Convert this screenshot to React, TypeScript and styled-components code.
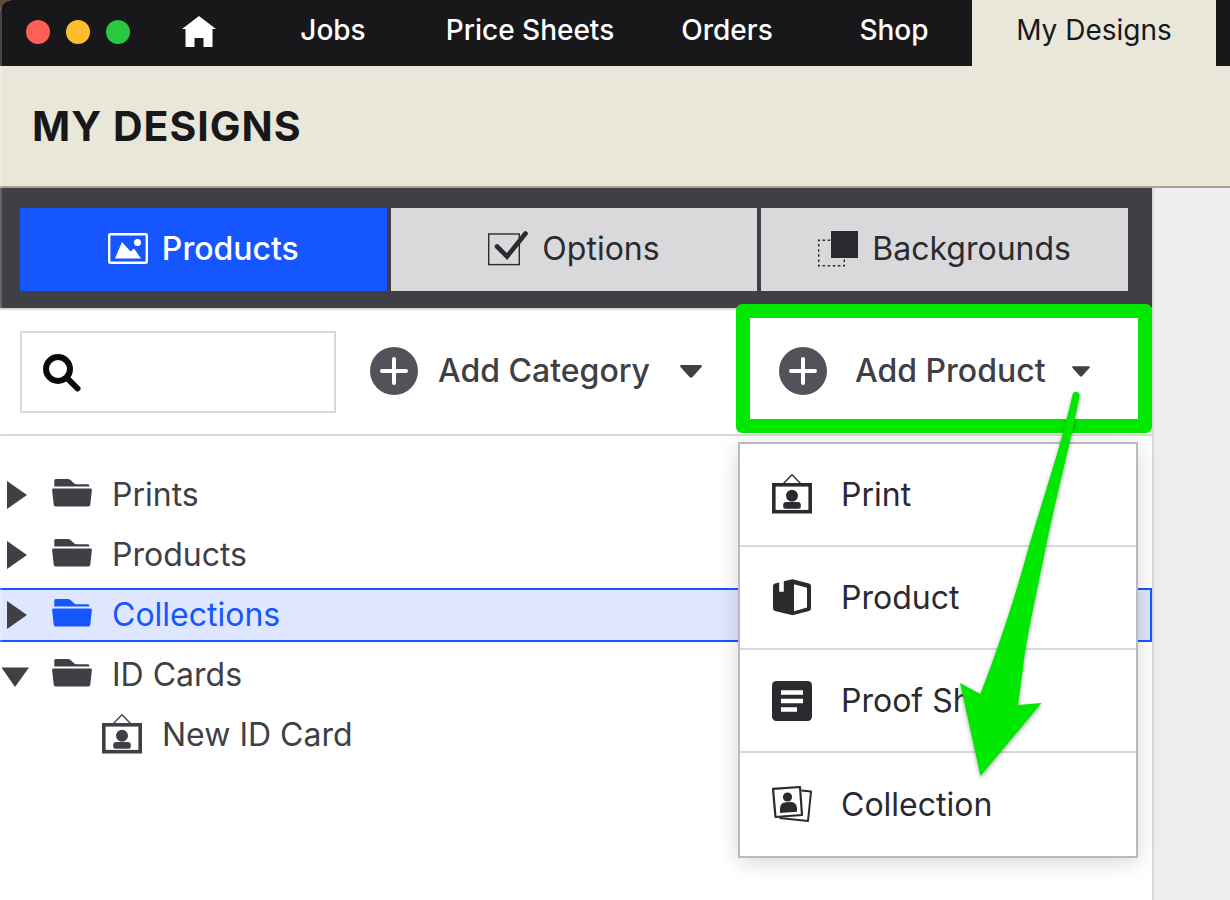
import React from "react";
import styled, { createGlobalStyle, css } from "styled-components";

const color = {
  ink: "#18181b",
  text: "#2b2a2f",
  slate: "#3f3f46",
  plus: "#52525b",
  blue: "#1556ff",
  blueSoft: "#dfe6ff",
  sand: "#e9e7da",
  sandLine: "#a6a48f",
  line: "#d9d9db",
  menuLine: "#b9b9be",
  panel: "#eeeef0",
  mark: "#00e800",
};

const GlobalStyle = createGlobalStyle`
  *, *::before, *::after { box-sizing: border-box; }
  body {
    margin: 0;
    background: #5a4a38;
    color: ${color.text};
    font-family: Inter, "Liberation Sans", sans-serif;
    font-size: 32px;
    line-height: 40px;
  }
  button, input { font: inherit; color: inherit; }
  button { background: none; border: 0; padding: 0; cursor: pointer; }
  svg { display: block; flex: none; }
`;

const Window = styled.div`
  position: relative;
  display: flex;
  flex-direction: column;
  min-height: 100vh;
  overflow: hidden;
  border-top-left-radius: 12px;
  background: #fff;

  &::after {
    content: "";
    position: absolute;
    inset: 0 auto 0 0;
    width: 2px;
    background: rgba(255, 255, 255, 0.2);
    pointer-events: none;
  }
`;

const TitleBar = styled.header`
  display: flex;
  height: 66px;
  padding-right: 14px;
  background: ${color.ink};
`;

const Lights = styled.div`
  display: flex;
  flex: none;
  align-items: center;
  gap: 16px;
  padding: 0 52px 2px 26px;
`;

const Light = styled.span<{ $tone: string }>`
  width: 24px;
  height: 24px;
  border-radius: 50%;
  background: ${(p) => p.$tone};
`;

const HomeLink = styled.a`
  display: flex;
  flex: none;
  align-items: center;
  width: 62px;
  padding-bottom: 3px;
  color: #fff;
`;

const Nav = styled.nav`
  display: grid;
  flex: 1;
  grid-template-columns: 178fr 216fr 178fr 156fr 244fr;
`;

const NavLink = styled.a<{ $active?: boolean }>`
  display: flex;
  align-items: center;
  justify-content: center;
  padding-bottom: 6px;
  font-size: 28px;
  font-weight: 500;
  white-space: nowrap;
  text-decoration: none;
  color: #fff;
  ${(p) =>
    p.$active &&
    css`
      font-weight: 400;
      color: ${color.ink};
      background: ${color.sand};
    `}
`;

const PageHead = styled.div`
  display: flex;
  align-items: center;
  height: 122px;
  padding: 0 32px;
  background: ${color.sand};
  border-bottom: 2px solid ${color.sandLine};
`;

const PageTitle = styled.h1`
  margin: 0;
  font-size: 41px;
  line-height: 48px;
  font-weight: 700;
  letter-spacing: 1px;
  color: ${color.ink};
`;

const Body = styled.div`
  display: flex;
  flex: 1;
`;

const Library = styled.main`
  flex: 1;
  min-width: 0;
`;

const SidePanel = styled.aside`
  flex: none;
  width: 78px;
  border-left: 2px solid ${color.line};
  background: ${color.panel};
`;

const Tabs = styled.div`
  display: grid;
  grid-template-columns: repeat(3, 1fr);
  gap: 4px;
  padding: 20px 24px 17px 20px;
  background: ${color.slate};
`;

const Tab = styled.button<{ $active?: boolean }>`
  display: flex;
  align-items: center;
  justify-content: center;
  gap: 14px;
  height: 83px;
  padding-bottom: 2px;
  font-weight: ${(p) => (p.$active ? 500 : 400)};
  color: ${(p) => (p.$active ? "#fff" : color.text)};
  background: ${(p) => (p.$active ? color.blue : color.line)};
`;

const Toolbar = styled.div`
  display: flex;
  align-items: center;
  gap: 34px;
  height: 128px;
  padding-left: 20px;
  border: solid ${color.line};
  border-width: 2px 0;
`;

const Search = styled.label`
  display: flex;
  flex: 1;
  align-items: center;
  gap: 12px;
  min-width: 0;
  height: 82px;
  padding: 2px 20px 0;
  border: 2px solid ${color.line};
`;

const SearchInput = styled.input`
  flex: 1;
  min-width: 0;
  border: 0;
  outline: 0;
  background: none;
`;

const AddButton = styled.button`
  display: flex;
  flex: none;
  align-items: center;
  height: 82px;
  padding-bottom: 2px;
  font-weight: 500;
  white-space: nowrap;
  color: ${color.slate};
`;

const AddLabel = styled.span<{ $before: number; $after: number }>`
  padding: 0 ${(p) => p.$after}px 0 ${(p) => p.$before}px;
`;

const ProductArea = styled.div`
  position: relative;
  display: flex;
  flex: none;
  align-items: center;
  align-self: stretch;
  width: 416px;
  padding-left: 43px;
`;

const Highlight = styled.div`
  position: absolute;
  inset: -6px 0 1px 0;
  border: 14px solid ${color.mark};
  border-radius: 6px;
  pointer-events: none;
`;

const Menu = styled.div`
  position: absolute;
  top: 132px;
  left: 2px;
  width: 400px;
  border: 2px solid ${color.menuLine};
  background: #fff;
  box-shadow: 0 4px 20px rgba(0, 0, 0, 0.16);
`;

const MenuItem = styled.button`
  display: flex;
  align-items: center;
  gap: 29px;
  width: 100%;
  height: 103px;
  padding-left: 32px;
  text-align: left;

  &:not(:last-child) {
    border-bottom: 2px solid ${color.line};
  }
`;

const Pointer = styled.svg`
  position: absolute;
  top: 78px;
  left: 216px;
  overflow: visible;
  pointer-events: none;
  filter: drop-shadow(0 2px 2px rgba(0, 0, 0, 0.35));
`;

const Tree = styled.ul`
  display: flex;
  flex-direction: column;
  gap: 6px;
  margin: 0;
  padding: 32px 0;
  list-style: none;
`;

const TreeRow = styled.button<{ $selected?: boolean; $child?: boolean }>`
  display: flex;
  align-items: center;
  width: 100%;
  height: 54px;
  padding-left: ${(p) => (p.$child ? 102 : 0)}px;
  border: 2px solid transparent;
  border-left: 0;
  text-align: left;
  color: ${color.slate};
  ${(p) =>
    p.$selected &&
    css`
      color: ${color.blue};
      background: ${color.blueSoft};
      border-color: ${color.blue};
    `}
`;

const Twisty = styled.span`
  flex: none;
  width: 52px;
  color: ${color.slate};
`;

const TreeLabel = styled.span`
  padding-left: 20px;
`;

const HomeIcon = () => (
  <svg width="34" height="31" viewBox="0 0 34 31" fill="currentColor" aria-hidden="true">
    <path d="M17 0 34 13h-3.500v18H21.500v-9h-9v9H3.500V13H0z" />
  </svg>
);

const ImageIcon = () => (
  <svg width="40" height="31" viewBox="0 0 40 31" fill="none" aria-hidden="true">
    <rect x="1.200" y="1.200" width="37.600" height="28.600" rx="1" stroke="currentColor" strokeWidth="2.400" />
    <path d="M7 25.500 14 9l8.500 9.500 3.500-3 7 10z" fill="currentColor" />
    <circle cx="29.500" cy="9.500" r="3.500" fill="currentColor" />
  </svg>
);

const CheckIcon = () => (
  <svg width="40" height="35" viewBox="0 0 40 35" fill="none" stroke="currentColor" aria-hidden="true">
    <rect x="0.700" y="3" width="30.600" height="30.600" strokeWidth="1.400" />
    <path d="M9 15.500 19 25.500 37.500 2.500" strokeWidth="4.600" strokeLinecap="round" />
  </svg>
);

const LayersIcon = () => (
  <svg width="40" height="36" viewBox="0 0 40 36" fill="none" aria-hidden="true">
    <rect x="0.700" y="9.200" width="25.600" height="25.600" stroke="currentColor" strokeWidth="1.400" strokeDasharray="2.600 2.520" strokeDashoffset="1.300" />
    <path d="M13 0h27v27H13z" fill="currentColor" />
  </svg>
);

const SearchIcon = () => (
  <svg width="40" height="40" viewBox="0 0 40 40" fill="none" stroke="#0a0a0b" aria-hidden="true">
    <circle cx="16" cy="16" r="12" strokeWidth="6" />
    <path d="M25 25 35.500 35.500" strokeWidth="6" strokeLinecap="round" />
  </svg>
);

const PlusIcon = () => (
  <svg width="48" height="48" viewBox="0 0 48 48" aria-hidden="true">
    <circle cx="24" cy="24" r="24" fill={color.plus} />
    <path d="M24 12v24M12 24h24" stroke="#fff" strokeWidth="4" strokeLinecap="round" />
  </svg>
);

const Caret = ({ width, height }: { width: number; height: number }) => (
  <svg width={width} height={height} viewBox="0 0 22 13" fill="currentColor" aria-hidden="true">
    <path d="M1 0h20q1.500.800.500 2L12.500 12q-1.500 1.300-3 0L.500 2Q-.500.800 1 0z" />
  </svg>
);

const TwistyIcon = ({ open }: { open?: boolean }) => (
  <svg width="30" height="28" viewBox="0 0 30 28" fill="currentColor" aria-hidden="true">
    <path d={open ? "M1.500 6.500h27.500L15 26z" : "M7 0v28l20-14z"} />
  </svg>
);

const FolderIcon = () => (
  <svg width="40" height="32" viewBox="0 0 40 32" fill="currentColor" aria-hidden="true">
    <path d="M2.300 7.500V1.500Q2.300 0 3.800 0h12q1.600 0 2.700 1l3.800 3.500q.8.700 2 .7h11.500q1.500 0 1.500 1.300v1z" />
    <path d="M1.500 9.500h37q1.600 0 1.400 1.600l-1.600 14.500q-.2 1.900-2 1.900H3.700q-1.800 0-2-1.900L.1 11.100q-.2-1.600 1.400-1.600z" />
  </svg>
);

const FrameIcon = () => (
  <svg width="40" height="42" viewBox="0 0 40 42" fill="none" aria-hidden="true">
    <path d="M11 10 20 .700 29 10" stroke="currentColor" strokeWidth="1.300" />
    <rect x="1.800" y="10.800" width="36.400" height="26.900" stroke="currentColor" strokeWidth="3.600" />
    <circle cx="20" cy="21.800" r="6" fill="currentColor" />
    <path d="M14.500 28h11q3.300 0 3.300 3v1.200q0 2.500-2.500 2.500H13.700q-2.500 0-2.500-2.500V31q0-3 3.300-3z" fill="currentColor" />
  </svg>
);

const BoxIcon = () => (
  <svg width="40" height="40" viewBox="0 0 40 40" aria-hidden="true">
    <path
      fill="currentColor"
      fillRule="evenodd"
      d="M20.500 1.200 37 5.500q2 .5 2 2.600v22.200q0 2.100-2 2.600L20.500 37.200 3 32.900q-2-.5-2-2.600V8.100q0-2.100 2-2.600l4.200-1.100v9.300h4.600V3.300zM22 6.200v27l13-3.600V9.800z"
    />
  </svg>
);

const SheetIcon = () => (
  <svg width="40" height="40" viewBox="0 0 40 40" aria-hidden="true">
    <rect width="40" height="40" rx="4.500" fill="currentColor" />
    <path d="M9 11.500h22M9 20h22M9 28.500h16" stroke="#fff" strokeWidth="4.400" />
  </svg>
);

const PhotosIcon = () => (
  <svg width="40" height="40" viewBox="0 0 40 40" fill="none" aria-hidden="true">
    <path d="M29.500 5.500 39 6.600 36 36 7.500 33" stroke="currentColor" strokeWidth="2" strokeLinejoin="round" />
    <path d="M1 3.800 28 2l2 28L3.500 32z" stroke="currentColor" strokeWidth="2.200" strokeLinejoin="round" />
    <circle cx="15.500" cy="12" r="4.600" fill="currentColor" />
    <path d="M8 28v-4q0-6.500 6-6.700l4-.2q6.500 0 7 5.900v3.700z" fill="currentColor" />
  </svg>
);

const tabs = [
  { label: "Products", icon: <ImageIcon />, active: true },
  { label: "Options", icon: <CheckIcon />, active: false },
  { label: "Backgrounds", icon: <LayersIcon />, active: false },
];

const folders = [
  { label: "Prints" },
  { label: "Products" },
  { label: "Collections", selected: true },
  { label: "ID Cards", open: true },
];

const menuItems = [
  { label: "Print", icon: <FrameIcon /> },
  { label: "Product", icon: <BoxIcon /> },
  { label: "Proof Sheet", icon: <SheetIcon /> },
  { label: "Collection", icon: <PhotosIcon /> },
];

export default function App() {
  return (
    <Window>
      <GlobalStyle />
      <TitleBar>
        <Lights>
          <Light $tone="#ff5f57" />
          <Light $tone="#febc2e" />
          <Light $tone="#28c840" />
        </Lights>
        <HomeLink href="#home" aria-label="Home">
          <HomeIcon />
        </HomeLink>
        <Nav>
          <NavLink href="#jobs">Jobs</NavLink>
          <NavLink href="#price-sheets">Price Sheets</NavLink>
          <NavLink href="#orders">Orders</NavLink>
          <NavLink href="#shop">Shop</NavLink>
          <NavLink href="#my-designs" $active aria-current="page">
            My Designs
          </NavLink>
        </Nav>
      </TitleBar>
      <PageHead>
        <PageTitle>MY DESIGNS</PageTitle>
      </PageHead>
      <Body>
        <Library>
          <Tabs role="tablist">
            {tabs.map((t) => (
              <Tab key={t.label} role="tab" aria-selected={t.active} $active={t.active}>
                {t.icon}
                {t.label}
              </Tab>
            ))}
          </Tabs>
          <Toolbar>
            <Search>
              <SearchIcon />
              <SearchInput type="text" aria-label="Search designs" />
            </Search>
            <AddButton>
              <PlusIcon />
              <AddLabel $before={20} $after={30}>
                Add Category
              </AddLabel>
              <Caret width={22} height={13} />
            </AddButton>
            <ProductArea>
              <AddButton aria-haspopup="menu" aria-expanded="true">
                <PlusIcon />
                <AddLabel $before={28} $after={26}>
                  Add Product
                </AddLabel>
                <Caret width={18} height={11} />
              </AddButton>
              <Highlight />
              <Menu role="menu">
                {menuItems.map((m) => (
                  <MenuItem key={m.label} role="menuitem">
                    {m.icon}
                    {m.label}
                  </MenuItem>
                ))}
              </Menu>
              <Pointer width="98" height="394" viewBox="952 388 98 394" aria-hidden="true">
                <path
                  fill={color.mark}
                  d="M1072.500 395C1073.500 390 1080.500 391 1079.500 396.500C1069 450 1056 497 1046 546C1037 592 1029 625 1024 660L1018 705L1041.500 703L980.500 776L960 683L980.500 694C985 681 989 672 993 660C1007 622 1018 586 1029 546C1044 495 1061 446 1072.500 395z"
                />
              </Pointer>
            </ProductArea>
          </Toolbar>
          <Tree>
            {folders.map((f) => (
              <li key={f.label}>
                <TreeRow $selected={f.selected} aria-expanded={!!f.open}>
                  <Twisty>
                    <TwistyIcon open={f.open} />
                  </Twisty>
                  <FolderIcon />
                  <TreeLabel>{f.label}</TreeLabel>
                </TreeRow>
              </li>
            ))}
            <li>
              <TreeRow $child>
                <FrameIcon />
                <TreeLabel>New ID Card</TreeLabel>
              </TreeRow>
            </li>
          </Tree>
        </Library>
        <SidePanel />
      </Body>
    </Window>
  );
}
